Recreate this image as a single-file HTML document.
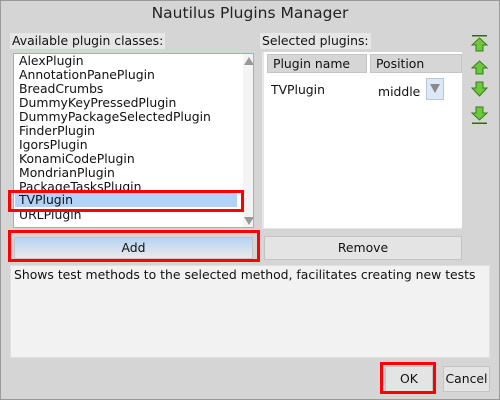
<!DOCTYPE html>
<html><head><style>
*{margin:0;padding:0;box-sizing:border-box}
body{width:500px;height:400px;background:#d5d5d5;font-family:"DejaVu Sans","Liberation Sans",sans-serif;font-size:12.4px;color:#111;position:relative;overflow:hidden}
.a{position:absolute}
.win{left:0;top:0;width:500px;height:400px;border:1px solid #9a9a9a}
.title{left:0;top:4px;width:500px;text-align:center;font-size:15.5px;color:#222}
.lbl{background:#e6e6e6;padding:0 2px;height:16px;line-height:16px}
.list{left:13px;top:53px;width:241px;height:175px;background:#fff;border:1px solid #8fb0d8;overflow:hidden}
.row{position:absolute;left:5px;height:14px;line-height:14px;white-space:nowrap}
.btn{background:#e4e4e4;border:1px solid #c4c4c4;text-align:center;line-height:20px}
.red{border:3px solid #f00}
</style></head><body>
<div class="a win"></div>
<div class="a title">Nautilus Plugins Manager</div>
<div class="a lbl" style="left:10px;top:33px">Available plugin classes:</div>
<div class="a lbl" style="left:260px;top:33px">Selected plugins:</div>
<div class="a list">
<div class="row" style="top:0">AlexPlugin</div>
<div class="row" style="top:14px">AnnotationPanePlugin</div>
<div class="row" style="top:28px">BreadCrumbs</div>
<div class="row" style="top:42px">DummyKeyPressedPlugin</div>
<div class="row" style="top:56px">DummyPackageSelectedPlugin</div>
<div class="row" style="top:70px">FinderPlugin</div>
<div class="row" style="top:84px">IgorsPlugin</div>
<div class="row" style="top:98px">KonamiCodePlugin</div>
<div class="row" style="top:112px">MondrianPlugin</div>
<div class="row" style="top:126px">PackageTasksPlugin</div>
<div class="row" style="top:154px">URLPlugin</div>
<div class="row" style="top:139px;height:14px;width:222px;left:1px;padding-left:4px;background:#b2d3f5">TVPlugin</div>
<div class="a" style="left:229px;top:0;width:11px;height:173px;background:#f4f4f4"></div>
<svg class="a" style="left:230px;top:3px" width="10" height="8"><path d="M5 0L10 8H0Z" fill="#999"/></svg>
<svg class="a" style="left:230px;top:163px" width="10" height="8"><path d="M0 0H10L5 8Z" fill="#999"/></svg>
</div>
<div class="a red" style="left:8px;top:190px;width:236px;height:22px"></div>
<div class="a" style="left:262px;top:52px;width:200px;height:177px;background:#e6e6e6"></div>
<div class="a" style="left:264px;top:52px;width:198px;height:176px;background:#fff"></div>
<div class="a" style="left:267px;top:54px;width:100px;height:19px;background:#d6d6d6;border:1px solid #c4c4c4;line-height:17px;padding-left:5px">Plugin name</div>
<div class="a" style="left:370px;top:54px;width:92px;height:19px;background:#d6d6d6;border:1px solid #c4c4c4;line-height:17px;padding-left:5px">Position</div>
<div class="a" style="left:271px;top:82px">TVPlugin</div>
<div class="a" style="left:378px;top:84px">middle</div>
<div class="a" style="left:426px;top:78px;width:18px;height:22px;background:#dce8f5;border:1px solid #b8c8d8"></div>
<svg class="a" style="left:430px;top:84px" width="10" height="9"><path d="M0 0H10L5 9Z" fill="#8a8a8a"/></svg>
<svg class="a" style="left:470px;top:34px" width="20" height="92">
<g fill="#6cc83c" stroke="#3a7a1a" stroke-width="1">
<rect x="2" y="1" width="15" height="1.5" fill="#2f6a10" stroke="none"/>
<path d="M9.5 4L17 11H13V17H6V11H2Z"/>
<path d="M9.5 27L17 34H13V40H6V34H2Z"/>
<path d="M6 48H13V54H17L9.5 62L2 54H6Z"/>
<path d="M6 73H13V79H17L9.5 86L2 79H6Z"/>
<rect x="2" y="88.5" width="15" height="1.5" fill="#2f6a10" stroke="none"/>
</g></svg>
<div class="a btn" style="left:14px;top:237px;width:239px;height:22px;background:linear-gradient(#b7d3f2,#eaeaea)">Add</div>
<div class="a red" style="left:8px;top:230px;width:252px;height:32px"></div>
<div class="a btn" style="left:264px;top:236px;width:198px;height:24px;line-height:22px">Remove</div>
<div class="a" style="left:10px;top:265px;width:480px;height:93px;background:#f2f2f2;border:1px solid #e0e0e0;padding:1px 3px;white-space:nowrap">Shows test methods to the selected method, facilitates creating new tests</div>
<div class="a btn" style="left:385px;top:366px;width:48px;height:26px;line-height:24px">OK</div>
<div class="a red" style="left:380px;top:362px;width:56px;height:32px"></div>
<div class="a btn" style="left:443px;top:366px;width:47px;height:26px;line-height:24px">Cancel</div>
</body></html>
